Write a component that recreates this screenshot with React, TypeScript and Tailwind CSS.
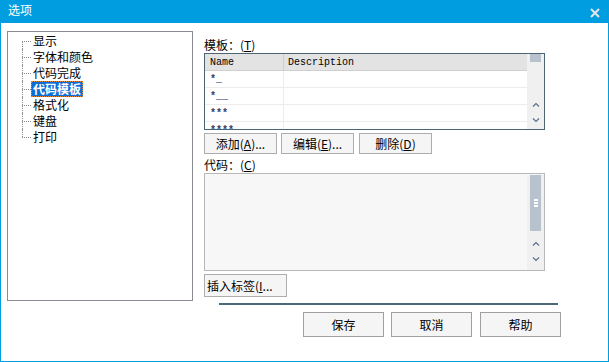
import React from "react";

const F = { fontFamily: '"Noto Sans CJK SC", "Noto Sans", sans-serif' };
const M = { fontFamily: '"Liberation Mono", "DejaVu Sans Mono", monospace' };

const items = ["显示", "字体和颜色", "代码完成", "代码模板", "格式化", "键盘", "打印"];

function Chevron({ up, cls }: { up?: boolean; cls?: string }) {
  return (
    <svg width="8" height="5" viewBox="0 0 8 5" className={cls}>
      {up ? (
        <path d="M1 4.5 L4 1.5 L7 4.5" fill="none" stroke="#5a6e8a" strokeWidth="1.2" />
      ) : (
        <path d="M1 0.5 L4 3.5 L7 0.5" fill="none" stroke="#5a6e8a" strokeWidth="1.2" />
      )}
    </svg>
  );
}

function U({ c }: { c: string }) {
  return <span className="underline underline-offset-[1px]">{c}</span>;
}

export default function App() {
  return (
    <div className="w-[609px] h-[362px] bg-[#009de0] flex flex-col text-[12px] text-black" style={F}>
      <div className="h-[23px] flex items-start shrink-0">
        <span className="pl-[8px] pt-[3px] leading-[14px] text-white text-[12px]">选项</span>
        <svg width="10" height="10" viewBox="0 0 10 10" className="ml-auto mr-[9px] mt-[8px]">
          <path d="M1 1 L9 9 M9 1 L1 9" stroke="#e6e6e6" strokeWidth="2" />
        </svg>
      </div>
      <div className="flex-1 mx-[1px] mb-[1px] bg-white flex items-start pl-[6px] pt-[8px]">
        {/* tree */}
        <div className="w-[186px] h-[270px] border border-[#8a8b92] pt-[1px] shrink-0">
          {items.map((t, i) => {
            const sel = i === 3;
            return (
              <div key={t} className="h-[16px] flex items-stretch pl-[14px]">
                <div className="w-[9px] flex flex-col shrink-0">
                  <div className={`h-[8px] ${i === 0 ? "" : "border-l border-dotted border-[#8c8c8c]"}`} />
                  <div
                    className={`h-[8px] border-t border-dotted border-[#8c8c8c] ${
                      i === items.length - 1 ? "" : "border-l"
                    }`}
                  />
                </div>
                <div
                  className={`flex items-center leading-[14px] px-[1px] ${
                    sel ? "bg-[#0c6dd6] text-white font-bold border border-dotted border-[#e0883a]" : "border border-transparent"
                  }`}
                >
                  {t}
                </div>
              </div>
            );
          })}
        </div>

        {/* right column */}
        <div className="ml-[11px] w-[341px] flex flex-col shrink-0">
          <div className="mt-[7px] h-[14px] leading-[14px]">
            模板：(<U c="T" />)
          </div>
          <div className="mt-[1px] h-[77px] border border-[#4d6572] flex overflow-hidden">
            <div className="flex-1 flex flex-col overflow-hidden text-[10px]" style={M}>
              <div className="h-[17px] shrink-0 bg-[#e3e3e3] border-b border-[#cfcfcf] flex items-center">
                <div className="w-[79px] h-full border-r border-[#cfcfcf] pl-[5px] flex items-center">Name</div>
                <div className="pl-[4px]">Description</div>
              </div>
              {["*_", "*__", "***", "****"].map((r) => (
                <div key={r} className="h-[17px] shrink-0 border-b border-[#ececec] flex items-center">
                  <div className="w-[79px] h-full border-r border-[#ececec] pl-[5px] flex items-center text-[#2d3e66] font-bold">
                    {r}
                  </div>
                </div>
              ))}
            </div>
            <div className="w-[17px] bg-[#f0f0f0] flex flex-col items-center shrink-0">
              <div className="w-[11px] h-[8px] bg-[#b8c2cc]" />
              <Chevron up cls="mt-[40px]" />
              <Chevron cls="mt-[11px]" />
            </div>
          </div>
          <div className="mt-[3px] flex">
            <button className="w-[73px] h-[21px] border border-[#adadad] bg-[#f5f5f5] leading-[14px] shrink-0">
              添加(<U c="A" />)...
            </button>
            <button className="ml-[4px] w-[73px] h-[21px] border border-[#adadad] bg-[#f5f5f5] leading-[14px] shrink-0">
              编辑(<U c="E" />)...
            </button>
            <button className="ml-[5px] w-[73px] h-[21px] border border-[#adadad] bg-[#f5f5f5] leading-[14px] shrink-0">
              删除(<U c="D" />)
            </button>
          </div>
          <div className="mt-[4px] h-[14px] leading-[14px]">
            代码：(<U c="C" />)
          </div>
          <div className="mt-[1px] h-[98px] border border-[#b8b8b8] bg-[#f7f7f7] flex justify-end pt-[1px]">
            <div className="w-[17px] h-[95px] bg-[#f0f0f0] flex flex-col items-center">
              <div className="w-[11px] h-[56px] bg-[#b8c2cc] flex flex-col items-center justify-center gap-[1px]">
                <div className="w-[4px] h-[2px] bg-white" />
                <div className="w-[4px] h-[2px] bg-white" />
                <div className="w-[4px] h-[2px] bg-white" />
              </div>
              <Chevron up cls="mt-[10px]" />
              <Chevron cls="mt-[11px]" />
            </div>
          </div>
          <button className="mt-[3px] w-[83px] h-[23px] border border-[#adadad] bg-[#f5f5f5] leading-[14px] text-left pl-[2px] whitespace-nowrap overflow-hidden">
            插入标签(<U c="I" />...
          </button>
          <div className="mt-[6px] ml-[15px] w-[339px] h-[2px] bg-[#4a6878]" />
          <div className="mt-[7px] flex w-[357px]">
            <button className="ml-[99px] w-[81px] h-[25px] border border-[#a0a0a0] bg-[#f5f5f5] shrink-0">保存</button>
            <button className="ml-[7px] w-[81px] h-[25px] border border-[#a0a0a0] bg-[#f5f5f5] shrink-0">取消</button>
            <button className="ml-[8px] w-[81px] h-[25px] border border-[#a0a0a0] bg-[#f5f5f5] shrink-0">帮助</button>
          </div>
        </div>
      </div>
    </div>
  );
}
